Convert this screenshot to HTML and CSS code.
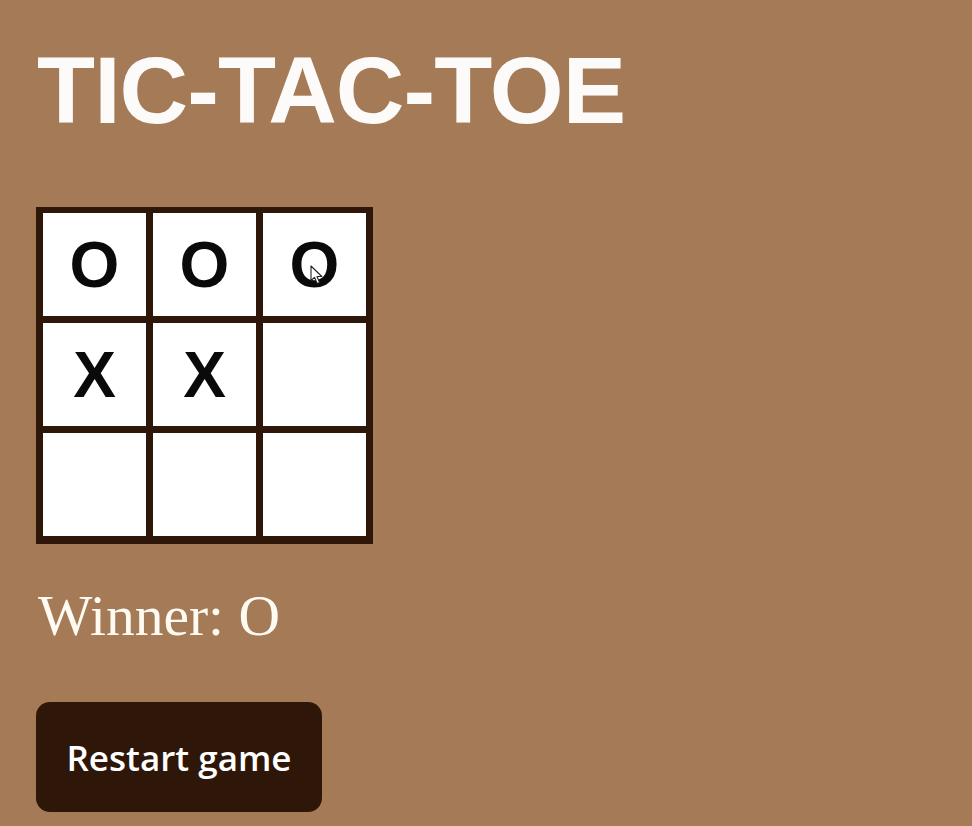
FILE: index.html
```html
<!DOCTYPE html>
<html lang="en">
<head>
<meta charset="utf-8">
<title>Tic-Tac-Toe</title>
<link rel="stylesheet" href="styles.css">
</head>
<body>
<main class="game">
  <h1 class="title">TIC-TAC-TOE</h1>
  <div class="board">
    <div class="cell">O</div>
    <div class="cell">O</div>
    <div class="cell">O
      <svg class="cursor" width="14" height="20" viewBox="0 0 14 20" aria-hidden="true">
        <path d="M1 1 L1 15.5 L4.5 12.3 L7.2 18.6 L9.6 17.6 L7 11.5 L11.8 11.5 Z" fill="#fff" stroke="#222" stroke-width="1.1" stroke-linejoin="round"/>
      </svg>
    </div>
    <div class="cell">X</div>
    <div class="cell">X</div>
    <div class="cell"></div>
    <div class="cell"></div>
    <div class="cell"></div>
    <div class="cell"></div>
  </div>
  <p class="status">Winner: O</p>
  <button class="restart" type="button">Restart game</button>
</main>
</body>
</html>
```

FILE: styles.css
```css
html, body {
  margin: 0;
  padding: 0;
  background: #a47a57;
}

body {
  width: 972px;
  height: 826px;
  overflow: hidden;
}

.game {
  padding: 37px 36px 0;
  display: flex;
  flex-direction: column;
  align-items: flex-start;
}

.title {
  margin: 0 0 0 1px;
  font-family: "Liberation Sans", Arial, sans-serif;
  font-weight: 700;
  font-size: 95px;
  line-height: 106px;
  color: #fdfbf9;
  letter-spacing: -0.9px;
}

.board {
  margin-top: 64px;
  display: grid;
  grid-template-columns: repeat(3, 103px);
  grid-template-rows: repeat(3, 103px);
  gap: 7px;
  padding: 6px 7px 8px 7px;
  background: #2e1608;
}

.cell {
  position: relative;
  background: #ffffff;
  display: flex;
  align-items: center;
  justify-content: center;
  font-family: "Liberation Sans", Arial, sans-serif;
  font-weight: 700;
  font-size: 64px;
  color: #0a0a0a;
}

.cursor {
  position: absolute;
  left: 47px;
  top: 52px;
}

.status {
  margin: 39px 0 0 2px;
  font-family: "Liberation Serif", "Times New Roman", serif;
  font-size: 57.5px;
  line-height: 66px;
  color: #fffaf2;
}

.restart {
  margin-top: 53px;
  width: 286px;
  height: 110px;
  border: none;
  border-radius: 14px;
  background: #2e1608;
  color: #ffffff;
  font-family: "Open Sans", "Noto Sans", sans-serif;
  font-weight: 600;
  font-size: 35px;
  display: flex;
  align-items: center;
  justify-content: center;
  padding: 0;
}
```
